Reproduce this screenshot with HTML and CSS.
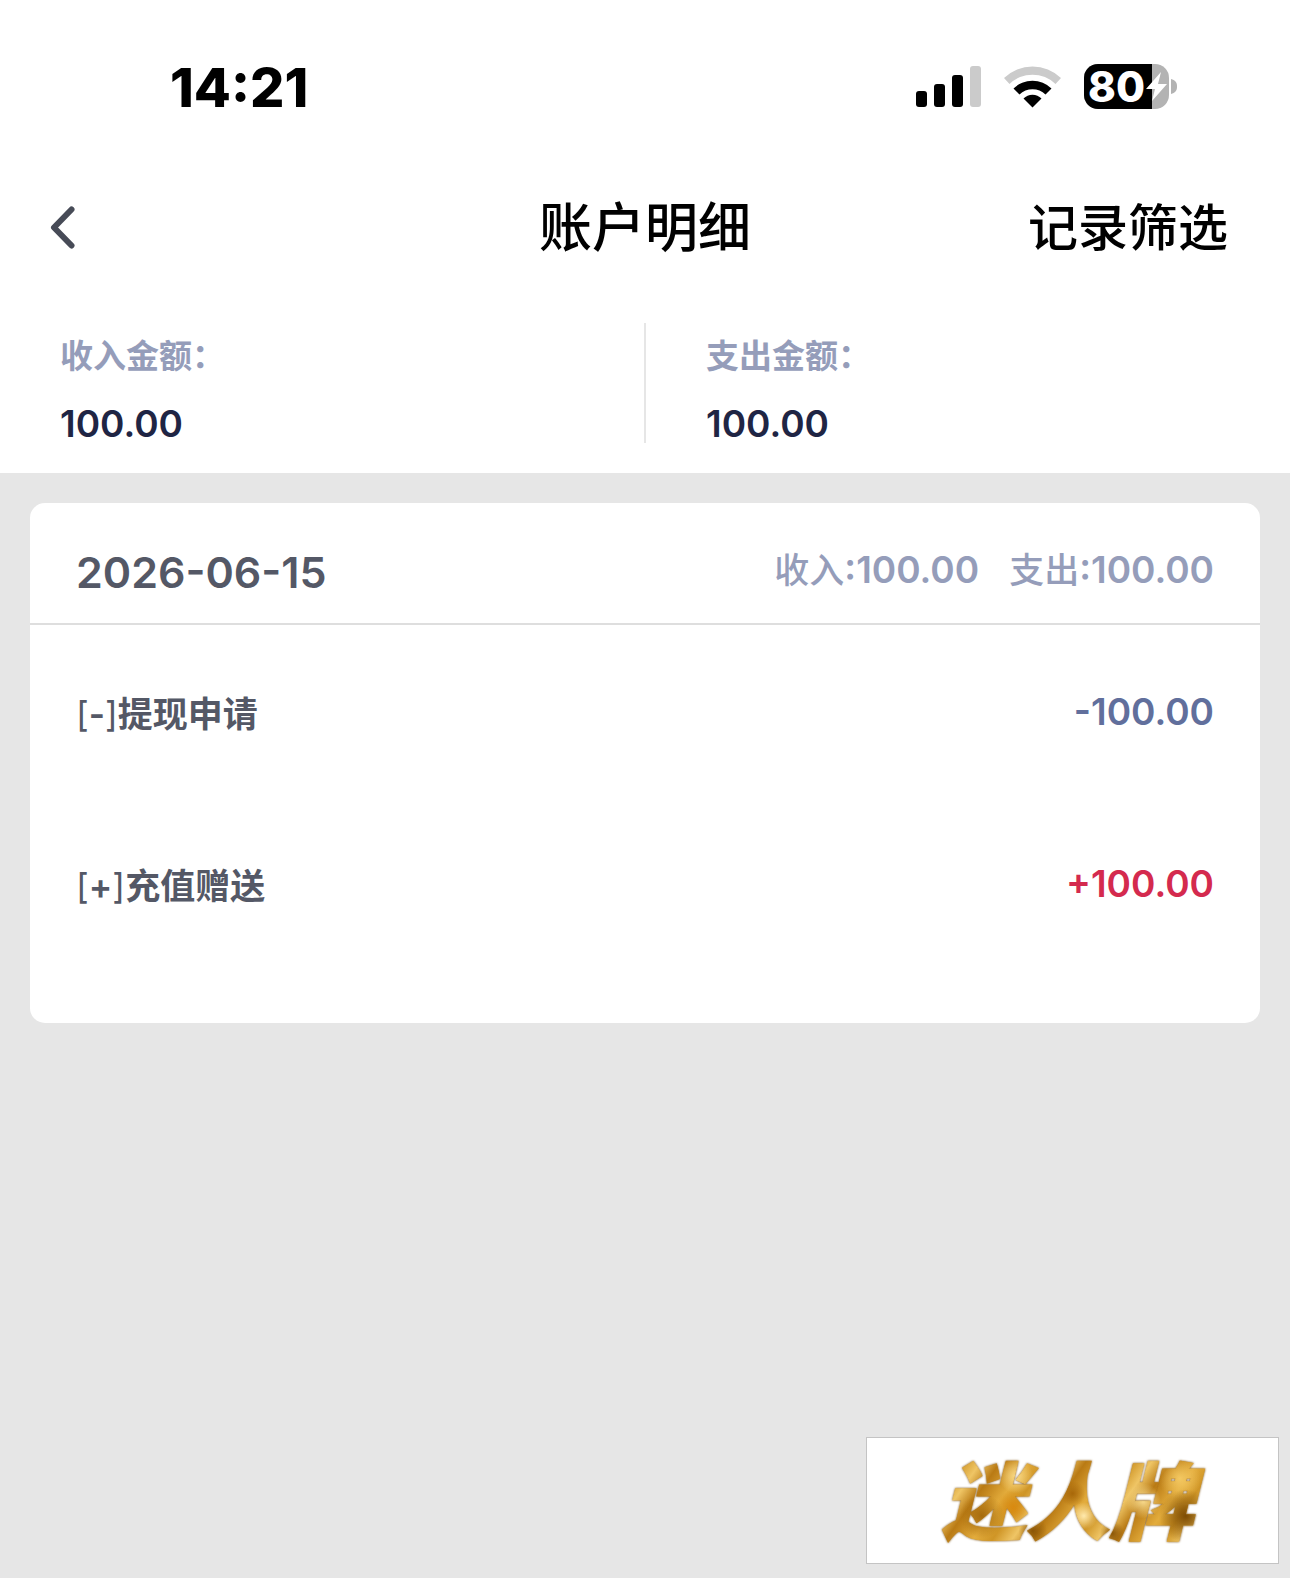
FILE: index.html
```html
<!DOCTYPE html>
<html lang="zh-CN">
<head>
    <meta charset="UTF-8">
    <meta name="viewport" content="width=device-width, initial-scale=1.0">
    <title>账户明细</title>
    <link rel="stylesheet" href="styles.css">
</head>
<body>

    <div class="status-bar">
        <span class="time">14:21</span>
        <div class="status-icons">
            <svg class="signal" width="66" height="42" viewBox="0 0 66 42">
                <rect x="0" y="25" width="11" height="16" rx="3"/>
                <rect x="18" y="18" width="11" height="23" rx="3"/>
                <rect x="36" y="9" width="11" height="32" rx="3"/>
                <rect x="54" y="0" width="11" height="41" rx="3" fill="#cbcbcb"/>
            </svg>
            <svg class="wifi" width="58" height="43" viewBox="0 0 58 43">
                <path d="M0 12 A41 41 0 0 1 57 12 L51.500 18 A33 33 0 0 0 5.500 18 Z" fill="#cbcbcb"/>
                <path d="M9.500 22.500 A27 27 0 0 1 47.500 22.500 L41.500 28.500 A18.500 18.500 0 0 0 15.500 28.500 Z"/>
                <path d="M19.500 32.500 A12.500 12.500 0 0 1 37.500 32.500 L28.500 41.500 Z"/>
            </svg>
            <div class="battery">
                <svg width="94" height="46" viewBox="0 0 94 46">
                    <defs>
                        <clipPath id="charge"><rect x="0" y="0" width="68" height="46"/></clipPath>
                    </defs>
                    <rect x="0" y="0" width="85" height="45" rx="14" fill="#b3b3b3"/>
                    <rect x="0" y="0" width="85" height="45" rx="14" clip-path="url(#charge)"/>
                    <path d="M87 15 C91 16 93 18 93 22.500 C93 27 91 29 87 30 Z" fill="#b3b3b3"/>
                    <path d="M77 8 L62 25 H71 L68 37 L83 20 H74 Z" fill="#fff"/>
                </svg>
                <span class="battery-level">80</span>
            </div>
        </div>
    </div>

    <header class="nav-bar">
        <button class="back-button" aria-label="返回">
            <svg width="26" height="44" viewBox="0 0 26 44">
                <path d="M21.500 3.500 L4 21.500 L21.500 39.500" fill="none" stroke="#474b57" stroke-width="6" stroke-linecap="round" stroke-linejoin="round"/>
            </svg>
        </button>
        <h1 class="title">账户明细</h1>
        <button class="filter-button">记录筛选</button>
    </header>

    <section class="summary">
        <div class="summary-item">
            <span class="summary-label">收入金额：</span>
            <span class="summary-value">100.00</span>
        </div>
        <div class="summary-item">
            <span class="summary-label">支出金额：</span>
            <span class="summary-value">100.00</span>
        </div>
    </section>

    <main class="content">
        <section class="card">
            <div class="card-header">
                <h2 class="date">2026-06-15</h2>
                <div class="totals">
                    <span><span class="totals-label">收入</span>:100.00</span>
                    <span><span class="totals-label">支出</span>:100.00</span>
                </div>
            </div>
            <ul class="records">
                <li class="record">
                    <span class="record-name"><span class="bracket">[</span>-<span class="bracket">]</span>提现申请</span>
                    <span class="amount expense">-100.00</span>
                </li>
                <li class="record">
                    <span class="record-name"><span class="bracket">[</span>+<span class="bracket">]</span>充值赠送</span>
                    <span class="amount income">+100.00</span>
                </li>
            </ul>
        </section>
    </main>

    <div class="brand"><span class="brand-text">迷人牌</span></div>

</body>
</html>
```
FILE: styles.css
```css
* {
    box-sizing: border-box;
}

body {
    margin: 0;
    min-height: 100vh;
    background-color: #e6e6e6;
    font-family: Inter, "Noto Sans CJK SC", sans-serif;
    font-weight: 600;
    color: #545866;
}

button {
    padding: 0;
    border: none;
    background: none;
    font-family: inherit;
    cursor: pointer;
}

.status-bar {
    display: flex;
    justify-content: space-between;
    align-items: center;
    height: 174px;
    padding: 0 112px 0 170px;
    background-color: #fff;
}

.time {
    font-size: 54px;
    font-weight: 800;
    color: #000;
}

.status-icons {
    display: flex;
    align-items: center;
    gap: 22px;
}

.battery {
    position: relative;
    display: flex;
}

.battery-level {
    position: absolute;
    left: 4px;
    top: 0;
    font-size: 42px;
    line-height: 45px;
    font-weight: 800;
    color: #fff;
}

.nav-bar {
    display: grid;
    grid-template-columns: 1fr auto 1fr;
    align-items: center;
    height: 108px;
    padding: 0 50px;
    background-color: #fff;
}

.back-button {
    justify-self: start;
    display: flex;
}

.title {
    margin: 0;
    padding-bottom: 8px;
    font-size: 53px;
    font-weight: 500;
    color: #000;
}

.filter-button {
    justify-self: end;
    padding: 0 12px 8px 0;
    font-size: 50px;
    font-weight: 500;
    color: #000;
}

.summary {
    display: flex;
    padding: 41px 0 30px;
    background-color: #fff;
}

.summary-item {
    flex: 1;
    display: flex;
    flex-direction: column;
    gap: 20px;
    height: 120px;
    padding: 9px 60px 0;
}

.summary-item + .summary-item {
    border-left: 2px solid #e6e6e6;
}

.summary-label {
    font-size: 33px;
    line-height: 48px;
    font-weight: 700;
    color: #959dba;
}

.summary-value {
    font-size: 37px;
    line-height: 48px;
    color: #1f2544;
}

.content {
    padding: 30px;
}

.card {
    border-radius: 15px;
    background-color: #fff;
}

.card-header {
    display: flex;
    justify-content: space-between;
    align-items: center;
    height: 122px;
    padding: 8px 46px 0;
    border-bottom: 2px solid #dedede;
}

.date {
    margin: 0;
    padding-top: 10px;
    font-size: 43px;
    font-weight: 600;
}

.totals {
    display: flex;
    gap: 30px;
    font-size: 37px;
    color: #959dba;
}

.totals-label {
    font-size: 35px;
    font-weight: 500;
}

.records {
    margin: 0;
    padding: 0 46px 54px;
    list-style: none;
}

.record {
    display: flex;
    justify-content: space-between;
    align-items: center;
    height: 172px;
    font-size: 37px;
}

.record-name {
    font-size: 35px;
}

.bracket {
    font-weight: 400;
}

.expense {
    color: #616f9c;
}

.income {
    color: #d42a4e;
}

.brand {
    position: fixed;
    right: 11px;
    bottom: 14px;
    display: flex;
    justify-content: center;
    align-items: center;
    width: 413px;
    height: 127px;
    border: 1px solid #c4c4c4;
    background-color: #fff;
}

/* gold leaf: light and dark patches over a slanted base */
.brand-text {
    padding: 4px 20px 0 10px;
    font-size: 84px;
    line-height: 120px;
    font-style: italic;
    font-weight: 900;
    color: transparent;
    background:
        radial-gradient(circle at 18% 62%, #a56a0c 0, transparent 9%),
        radial-gradient(circle at 30% 30%, #f8d987 0, transparent 8%),
        radial-gradient(circle at 29% 55%, #d98a10 0, transparent 8%),
        radial-gradient(circle at 36% 74%, #8a5506 0, transparent 7%),
        radial-gradient(circle at 50% 44%, #a8680a 0, transparent 8%),
        radial-gradient(circle at 54% 62%, #ffe9ad 0, transparent 8%),
        radial-gradient(circle at 64% 76%, #8a5506 0, transparent 6%),
        radial-gradient(circle at 75% 50%, #f8dc90 0, transparent 8%),
        radial-gradient(circle at 90% 62%, #7d4c04 0, transparent 10%),
        radial-gradient(circle at 88% 32%, #f3c862 0, transparent 8%),
        repeating-linear-gradient(125deg, #b97a14 0, #e3ac3c 22px, #cf9526 38px, #efc565 54px, #b97a14 70px);
    -webkit-background-clip: text;
    background-clip: text;
    -webkit-text-stroke: 1px transparent;
    filter: drop-shadow(0 0 1px #7a4d0a);
}
```
